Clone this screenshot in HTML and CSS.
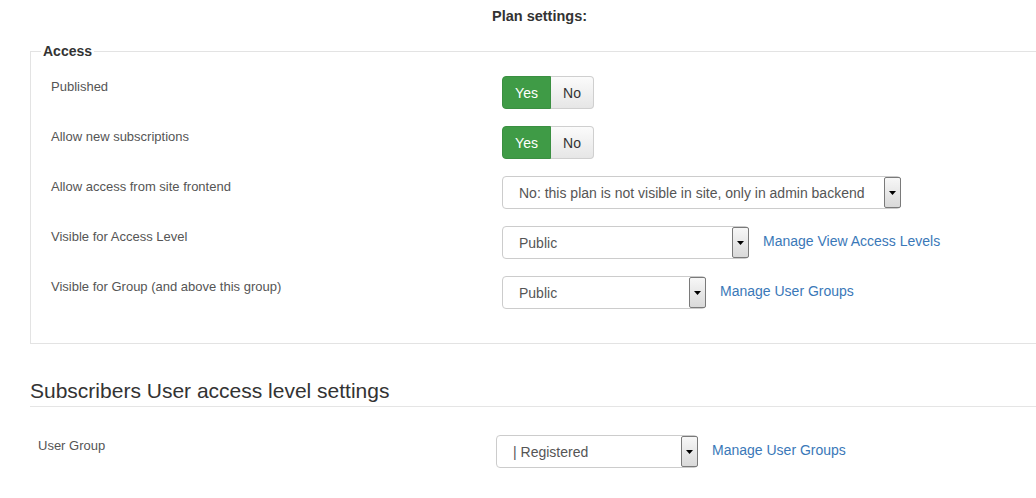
FILE: index.html
```html
<!DOCTYPE html>
<html lang="en">
<head>
<meta charset="utf-8">
<title>Plan settings</title>
<link rel="stylesheet" href="styles.css">
</head>
<body>
<div class="page">
  <div class="title">Plan settings:</div>

  <fieldset class="access">
    <legend>Access</legend>
    <div class="rows">
      <div class="row">
        <div class="label">Published</div>
        <div class="control">
          <div class="toggle"><span class="btn yes">Yes</span><span class="btn no">No</span></div>
        </div>
      </div>
      <div class="row">
        <div class="label">Allow new subscriptions</div>
        <div class="control">
          <div class="toggle"><span class="btn yes">Yes</span><span class="btn no">No</span></div>
        </div>
      </div>
      <div class="row">
        <div class="label">Allow access from site frontend</div>
        <div class="control">
          <div class="select w-wide"><span class="select-text">No: this plan is not visible in site, only in admin backend</span><span class="arrow"><svg width="7" height="4" viewBox="0 0 7 4"><polygon points="0,0 7,0 3.5,4" fill="#000"/></svg></span></div>
        </div>
      </div>
      <div class="row">
        <div class="label">Visible for Access Level</div>
        <div class="control">
          <div class="select w-mid"><span class="select-text">Public</span><span class="arrow"><svg width="7" height="4" viewBox="0 0 7 4"><polygon points="0,0 7,0 3.5,4" fill="#000"/></svg></span></div>
          <a class="link" href="#">Manage View Access Levels</a>
        </div>
      </div>
      <div class="row">
        <div class="label">Visible for Group (and above this group)</div>
        <div class="control">
          <div class="select w-small"><span class="select-text">Public</span><span class="arrow"><svg width="7" height="4" viewBox="0 0 7 4"><polygon points="0,0 7,0 3.5,4" fill="#000"/></svg></span></div>
          <a class="link" href="#">Manage User Groups</a>
        </div>
      </div>
    </div>
  </fieldset>

  <h3 class="section-title">Subscribers User access level settings</h3>

  <div class="row row-plain">
    <div class="label">User Group</div>
    <div class="control">
      <div class="select w-small2"><span class="select-text">| Registered</span><span class="arrow"><svg width="7" height="4" viewBox="0 0 7 4"><polygon points="0,0 7,0 3.5,4" fill="#000"/></svg></span></div>
      <a class="link" href="#">Manage User Groups</a>
    </div>
  </div>
</div>
</body>
</html>
```

FILE: styles.css
```css
html, body {
  margin: 0;
  padding: 0;
  background: #fff;
  overflow: hidden;
}

body {
  font-family: "Liberation Sans", Arial, sans-serif;
  color: #333;
}

.page {
  width: 1036px;
  padding-top: 8px;
  overflow: hidden;
}

.title {
  margin-left: 492px;
  font-size: 14.5px;
  line-height: 17px;
  font-weight: bold;
  color: #333;
}

.access {
  margin: 18px -80px 0 30px;
  padding: 17px 0 34px 10px;
  border: 1px solid #e3e3e3;
  min-width: 0;
}

.access legend {
  padding: 0 2px;
  font-size: 14px;
  line-height: 16px;
  font-weight: bold;
  color: #333;
}

.rows {
  display: flex;
  flex-direction: column;
  gap: 17px;
  padding-left: 10px;
}

.row {
  display: grid;
  grid-template-columns: 451px auto;
  align-items: start;
  height: 33px;
}

.label {
  padding-top: 2px;
  font-size: 13px;
  line-height: 18px;
  color: #555;
}

.control {
  display: flex;
  align-items: center;
  gap: 14px;
  height: 33px;
}

.toggle {
  display: flex;
  height: 33px;
}

.btn {
  display: flex;
  align-items: center;
  justify-content: center;
  box-sizing: border-box;
  height: 33px;
  font-size: 14px;
}

.btn.yes {
  width: 49px;
  background: #3f9b46;
  border: 1px solid #3a8f41;
  border-radius: 4px 0 0 4px;
  color: #fff;
}

.btn.no {
  width: 43px;
  background: linear-gradient(#fbfbfb, #e6e6e6);
  border: 1px solid #cfcfcf;
  border-left: none;
  border-radius: 0 4px 4px 0;
  color: #333;
}

.select {
  display: flex;
  box-sizing: border-box;
  height: 33px;
  border: 1px solid #cccccc;
  border-radius: 4px;
  background: #fff;
}

.w-wide { width: 399px; }
.w-mid { width: 247px; }
.w-small { width: 204px; }
.w-small2 { width: 202px; }

.select-text {
  flex: 1;
  display: flex;
  align-items: center;
  padding-left: 16px;
  font-size: 14px;
  color: #555;
  white-space: nowrap;
}

.arrow {
  display: flex;
  align-items: center;
  justify-content: center;
  box-sizing: border-box;
  width: 17px;
  margin: 0 -1px 0 0;
  border: 1px solid #7a7a7a;
  border-radius: 2px;
  background: linear-gradient(#f7f7f7, #d9d9d9);
}

.link {
  font-size: 14px;
  color: #3a78b8;
  text-decoration: none;
  white-space: nowrap;
  margin-top: -3px;
}

.section-title {
  margin: 35px -80px 0 30px;
  padding-bottom: 3px;
  font-size: 21px;
  line-height: 24px;
  font-weight: normal;
  color: #333;
  border-bottom: 1px solid #e5e5e5;
}

.row-plain {
  margin-top: 28px;
  padding-left: 38px;
  grid-template-columns: 458px auto;
}
```
